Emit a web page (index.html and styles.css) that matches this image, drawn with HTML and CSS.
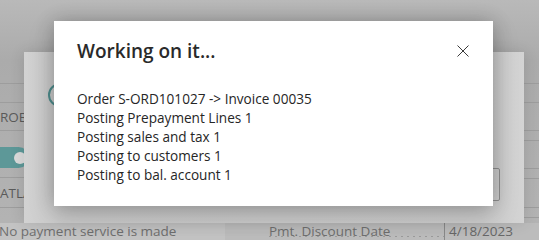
FILE: index.html
```
<!DOCTYPE html>
<html lang="en">
<head>
<meta charset="UTF-8">
<meta name="viewport" content="width=device-width, initial-scale=1.0">
<title>Working on it...</title>
<link rel="stylesheet" href="styles.css">
</head>
<body>

<div class="page">
    <div class="col col-left">
        <div class="row r1"></div>
        <div class="row r2"><span class="cut">ROB</span></div>
        <div class="row r3"><span class="toggle"><span class="knob"></span></span></div>
        <div class="row r4"><span class="cut">ATLA</span></div>
        <div class="row r5"></div>
    </div>
    <div class="col col-right">
        <div class="row r1"></div>
        <div class="row ra"></div>
        <div class="row rb"></div>
        <div class="row rc"></div>
        <div class="row rd"></div>
        <div class="row re"></div>
        <div class="row rf"></div>
        <div class="row rg"></div>
    </div>
    <div class="footer-row">
        <span class="foot-text">No payment service is made</span>
        <span class="foot-label">Pmt. Discount Date</span>
        <span class="foot-value">4/18/2023</span>
    </div>
</div>

<!-- dialog underneath -->
<div class="back-dialog">
    <span class="ring"></span>
    <span class="box"></span>
</div>

<div class="dialog">
    <h2 class="dialog-title">Working on it...</h2>
    <button class="close" type="button" aria-label="Close">
        <svg width="12" height="12" viewBox="0 0 12 12">
            <path d="M0.5 0.5 L11.5 11.5 M11.5 0.5 L0.5 11.5" stroke="#3a3a3a" stroke-width="1" fill="none"/>
        </svg>
    </button>
    <div class="dialog-body">
        <div>Order S-ORD101027 -&gt; Invoice 00035</div>
        <div>Posting Prepayment Lines 1</div>
        <div>Posting sales and tax 1</div>
        <div>Posting to customers 1</div>
        <div>Posting to bal. account 1</div>
    </div>
</div>

</body>
</html>
```

FILE: styles.css
```
body {
    margin: 0;
    width: 539px;
    height: 240px;
    overflow: hidden;
    position: relative;
    font-family: "Open Sans", "Noto Sans", sans-serif;
    background: linear-gradient(#b9b9b9, #ababab 60px, #b4b4b4);
}

.page {
    display: grid;
    grid-template-columns: 225px 1fr;
    grid-template-rows: 223px 17px;
}

.col {
    display: flex;
    flex-direction: column;
    padding-top: 83px;
}

.row {
    border-top: 1px solid #9d9d9d;
    box-sizing: border-box;
    color: #5a5a5a;
    font-size: 13.5px;
    display: flex;
    align-items: center;
}

.r1 { height: 19px; }
.r2 { height: 28px; }
.r3 { height: 47px; padding-top: 16px; align-items: flex-start; }
.r4 { height: 30px; }
.r5 { height: 16px; }

.ra { height: 28px; }
.rb { height: 10px; }
.rc { height: 28px; }
.rd { height: 10px; }
.re { height: 29px; }
.rf { height: 10px; }
.rg { height: 6px; }

.cut {
    white-space: nowrap;
}

.toggle {
    display: flex;
    align-items: center;
    justify-content: flex-end;
    width: 30px;
    height: 21px;
    margin-left: -4px;
    padding-right: 3px;
    border-radius: 0 11px 11px 0;
    background-color: #5d9898;
}

.knob {
    width: 12px;
    height: 12px;
    border-radius: 50%;
    background-color: #dadada;
}

.footer-row {
    grid-column: 1 / 3;
    display: flex;
    align-items: center;
    font-size: 13.5px;
    color: #6f6f6f;
    background: linear-gradient(90deg, #c3c3c3 225px, #bcbcbc 225px);
    line-height: 17px;
    white-space: nowrap;
}

.foot-text {
    margin-left: -1px;
    width: 270px;
}

.foot-label {
    width: 175px;
    box-sizing: border-box;
    background: radial-gradient(circle, #9a9a9a 0.7px, transparent 1px) 118px 12px / 6px 3px repeat-x;
}

.foot-value {
    border-left: 1px solid #8a8a8a;
    padding-left: 4px;
    color: #686868;
}

/* dialog underneath, dimmed */
.back-dialog {
    position: absolute;
    left: 24px;
    top: 52px;
    width: 500px;
    height: 171px;
    background: linear-gradient(90deg, #d2d2d2, #c9c9c9 40px, #cbcbcb 460px, #d4d4d4);
    box-shadow: 0 0 14px rgba(0, 0, 0, 0.12);
}

.ring {
    position: absolute;
    left: 24px;
    top: 31px;
    width: 20px;
    height: 20px;
    border: 2px solid #4f8e8e;
    border-radius: 50%;
}

.box {
    position: absolute;
    left: 440px;
    top: 116px;
    width: 34px;
    height: 31px;
    border: 1px solid #8f8f8f;
    border-radius: 2px;
}

.dialog {
    position: absolute;
    left: 54px;
    top: 21px;
    width: 439px;
    height: 185px;
    box-sizing: border-box;
    padding: 16px 22px 22px 23px;
    background-color: #ffffff;
    box-shadow: 0 0 18px rgba(0, 0, 0, 0.2), 0 8px 26px rgba(0, 0, 0, 0.16);
}

.dialog-title {
    margin: 0;
    font-size: 19px;
    font-weight: 600;
    line-height: 28px;
    color: #2a2a2a;
}

.close {
    position: absolute;
    top: 24px;
    right: 24px;
    width: 12px;
    height: 12px;
    padding: 0;
    border: none;
    background: none;
    display: flex;
}

.dialog-body {
    margin-top: 24px;
    font-size: 13.6px;
    line-height: 19px;
    color: #262626;
}
```
